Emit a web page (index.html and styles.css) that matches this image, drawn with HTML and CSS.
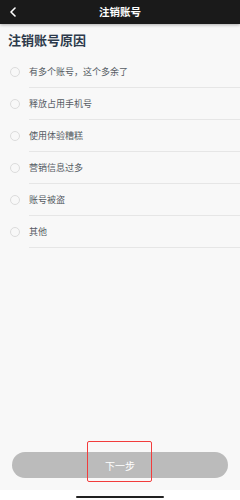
FILE: index.html
```html
<!DOCTYPE html>
<html lang="zh-CN">
<head>
  <meta charset="UTF-8" />
  <meta name="viewport" content="width=device-width, initial-scale=1.0" />
  <title>注销账号</title>
  <link rel="stylesheet" href="styles.css">
</head>
<body>
  <div class="page">
    <!-- ヘッダー -->
    <header class="nav">
      <svg class="nav-back" width="8" height="10" viewBox="0 0 8 10">
        <path d="M6 1 L2 5 L6 9" fill="none" stroke="#fff" stroke-width="1.6" stroke-linecap="round" stroke-linejoin="round"/>
      </svg>
      <div class="nav-title">注销账号</div>
    </header>

    <h1 class="section-title">注销账号原因</h1>

    <ul class="reason-list">
      <li class="reason"><span class="radio"></span><span class="reason-text">有多个账号，这个多余了</span></li>
      <li class="reason"><span class="radio"></span><span class="reason-text">释放占用手机号</span></li>
      <li class="reason"><span class="radio"></span><span class="reason-text">使用体验糟糕</span></li>
      <li class="reason"><span class="radio"></span><span class="reason-text">营销信息过多</span></li>
      <li class="reason"><span class="radio"></span><span class="reason-text">账号被盗</span></li>
      <li class="reason"><span class="radio"></span><span class="reason-text">其他</span></li>
    </ul>

    <div class="footer">
      <button class="next-btn">下一步</button>
      <span class="highlight"></span>
    </div>

    <div class="home-bar"><span></span></div>
  </div>
</body>
</html>
```

FILE: styles.css
```css
:root {
  --bg-color: #f8f8f8;
  --title-color: #2d3a4b;
  --text-color: #555b63;
  --line-color: #e6e6e6;
  --btn-color: #bbbbbb;
}
* {
  box-sizing: border-box;
  margin: 0;
  padding: 0;
}
body {
  font-family: "Noto Sans", "Noto Sans CJK SC", sans-serif;
  background-color: var(--bg-color);
  width: 240px;
  height: 500px;
  overflow: hidden;
}
.page {
  display: flex;
  flex-direction: column;
  height: 500px;
}
.nav {
  position: relative;
  height: 24px;
  background-color: #1a1a1a;
  display: flex;
  align-items: center;
  justify-content: center;
  box-shadow: 0 1px 3px rgba(0, 0, 0, 0.3);
  flex-shrink: 0;
}
.nav-back {
  position: absolute;
  left: 9px;
  top: 7px;
}
.nav-title {
  color: #fff;
  font-size: 10.5px;
  font-weight: bold;
  line-height: 24px;
}
.section-title {
  color: var(--title-color);
  font-size: 13px;
  font-weight: bold;
  line-height: 18px;
  padding: 7px 0 0 8px;
  height: 32px;
  flex-shrink: 0;
}
.reason-list {
  list-style: none;
}
.reason {
  display: flex;
  align-items: center;
  height: 32px;
}
.radio {
  width: 10px;
  height: 10px;
  border: 1px solid #dcdcdc;
  border-radius: 50%;
  margin-left: 10px;
  margin-right: 9px;
  flex-shrink: 0;
}
.reason-text {
  flex: 1;
  height: 32px;
  line-height: 32px;
  font-size: 9px;
  color: var(--text-color);
  border-bottom: 1px solid var(--line-color);
}
.footer {
  position: relative;
  margin-top: auto;
  padding: 0 12px 12px;
}
.next-btn {
  display: block;
  width: 100%;
  height: 26px;
  border: none;
  border-radius: 13px;
  background-color: var(--btn-color);
  color: #fff;
  font-family: inherit;
  font-size: 10px;
}
/* 赤枠 */
.highlight {
  position: absolute;
  left: 87px;
  top: -11px;
  width: 65px;
  height: 41px;
  border: 1px solid #f23c3c;
  border-radius: 2px;
}
.home-bar {
  height: 10px;
  background-color: #fff;
  display: flex;
  justify-content: center;
  padding-top: 6px;
  flex-shrink: 0;
}
.home-bar span {
  width: 88px;
  height: 2px;
  border-radius: 1px;
  background-color: #222;
}
```
